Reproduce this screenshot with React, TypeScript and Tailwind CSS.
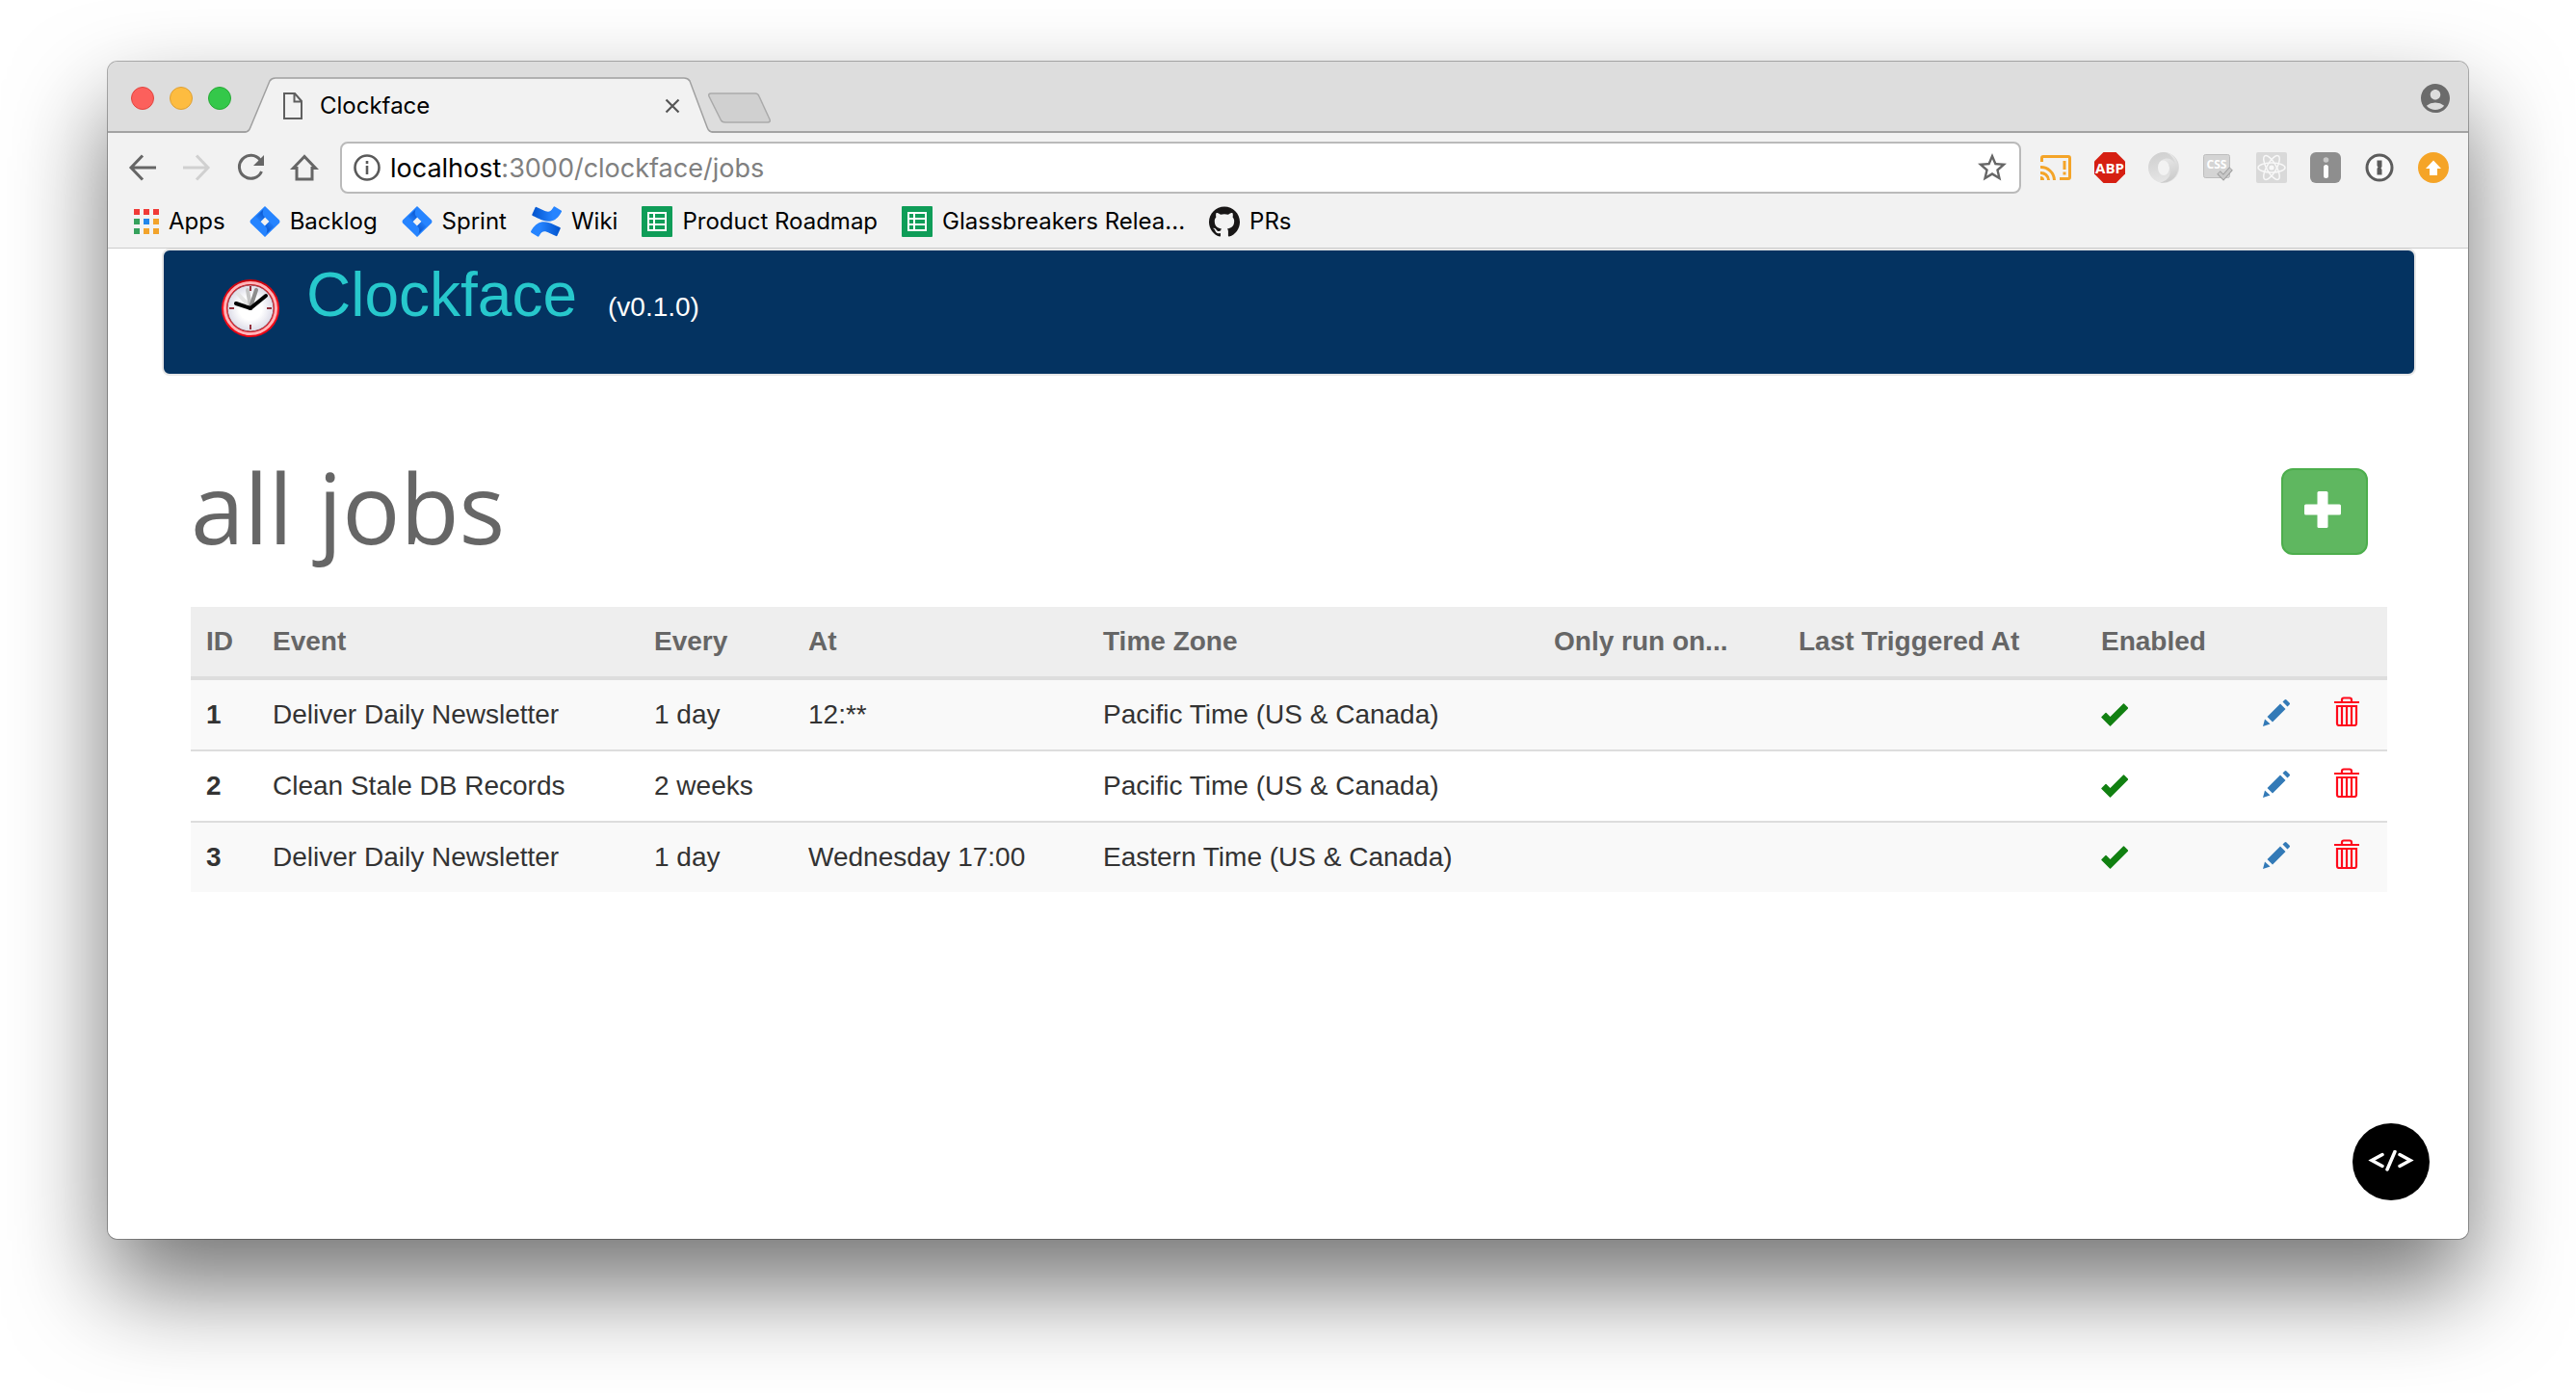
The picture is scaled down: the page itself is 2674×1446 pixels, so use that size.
import React, { useState } from "react";
import { SiGithub } from "react-icons/si";
import { MdAccountCircle, MdStarBorder } from "react-icons/md";

function NavIcon({ label, path, muted = false }: { label: string; path: React.ReactNode; muted?: boolean }) {
  return (
    <button type="button" aria-label={label} className={muted ? "text-[#d0d0d0]" : "text-[#666666]"}>
      <svg className="size-8" viewBox="0 0 32 32" fill="none" stroke="currentColor" strokeWidth="3">
        {path}
      </svg>
    </button>
  );
}

function TabStrip() {
  return (
    <div className="flex h-[74px] items-stretch border-b-2 border-[#a3a3a3] bg-[#dddddd] pr-4 pl-6">
      <div className="flex shrink-0 items-center gap-4 pt-1">
        <button type="button" aria-label="Close window" className="size-6 rounded-full border border-[#e2443f] bg-[#fc605c]" />
        <button type="button" aria-label="Minimize window" className="size-6 rounded-full border border-[#dea034] bg-[#fdbc40]" />
        <button type="button" aria-label="Zoom window" className="size-6 rounded-full border border-[#27a935] bg-[#34c84a]" />
      </div>
      <div className="relative ml-3 flex h-[74px] w-[490px] items-center pt-[18px] pr-9 pl-10">
        <svg className="absolute inset-0 size-full" viewBox="0 0 490 74" preserveAspectRatio="none" fill="none">
          <path d="M2 74 C6 73 7 71 8 68 L28 20 Q30 17 34 17 H458 Q462 17 464 20 L482 68 C483 71 484 73 488 74 Z" fill="#f2f2f2" />
          <path d="M2 73 C6 73 7 71 8 68 L28 20 Q30 17 34 17 H458 Q462 17 464 20 L482 68 C483 71 484 73 488 73" stroke="#a0a0a0" strokeWidth="1.5" />
        </svg>
        <svg className="relative h-7 w-6" viewBox="0 0 24 28" fill="none" stroke="#5f5f5f" strokeWidth="2">
          <path d="M3 1 H14 L21 9 V27 H3 Z M13.500 1 V9.500 H21" />
        </svg>
        <span className="relative ml-4 flex-1 text-2xl text-black">Clockface</span>
        <button type="button" aria-label="Close tab" className="relative">
          <svg className="size-4" viewBox="0 0 16 16" stroke="#555555" strokeWidth="2.200">
            <path d="M1.500 1.500 L14.500 14.500 M14.500 1.500 L1.500 14.500" />
          </svg>
        </button>
      </div>
      <button type="button" aria-label="New tab" className="mt-8 -ml-2 h-8 w-[68px]">
        <svg className="size-full" viewBox="0 0 68 32" fill="#d0d0d0" stroke="#aaaaaa" strokeWidth="1.500">
          <path d="M4 1 H50 Q53 1 54 4 L65 28 Q66 31 63 31 H19 Q15 31 14 28 L2 4 Q1 1 4 1 Z" />
        </svg>
      </button>
      <button type="button" aria-label="Profile" className="ml-auto self-center pt-1 text-[#6b6b6b]">
        <MdAccountCircle className="size-9" />
      </button>
    </div>
  );
}

const extensions: { name: string; art: React.ReactNode }[] = [
  {
    name: "Cast",
    art: (
      <g fill="none" stroke="#f4a428" strokeWidth="3">
        <path d="M1.500 10 V6 Q1.500 4.500 3 4.500 H29 Q30.500 4.500 30.500 6 V26 Q30.500 27.500 29 27.500 H20" />
        <path d="M0 15.500 A14 14 0 0 1 14.500 29 M0 21.500 A8 8 0 0 1 8.500 29" />
        <path d="M0 29 V25 A4 4 0 0 1 4 29 Z" fill="#f4a428" stroke="none" />
        <path d="M25 9 V18 M25 20.500 V23.500" />
      </g>
    ),
  },
  {
    name: "Adblock Plus",
    art: (
      <g>
        <path d="M9.500 0 H22.500 L32 9.500 V22.500 L22.500 32 H9.500 L0 22.500 V9.500 Z" fill="#d61f12" />
        <text x="16" y="21.500" textAnchor="middle" fontFamily="Open Sans" fontWeight="700" fontSize="15" fill="#ffffff">
          ABP
        </text>
      </g>
    ),
  },
  {
    name: "JSON viewer",
    art: (
      <g>
        <defs>
          <linearGradient id="ringA" x1="0.300" y1="0" x2="0.500" y2="1">
            <stop offset="0" stopColor="#d0d0d0" />
            <stop offset="0.500" stopColor="#dadada" />
            <stop offset="1" stopColor="#e6e6e6" />
          </linearGradient>
          <linearGradient id="ringB" x1="0.500" y1="0" x2="0.700" y2="1">
            <stop offset="0" stopColor="#ececec" />
            <stop offset="1" stopColor="#c8c8c8" />
          </linearGradient>
        </defs>
        <path d="M16 0 A16 16 0 1 0 16 32 A16 16 0 1 0 16 0 Z M16 8 A6 8 0 1 1 16 24 A6 8 0 1 1 16 8 Z" fill="url(#ringA)" fillRule="evenodd" />
        <path d="M18 0 A16 16 0 0 1 12 31.500 C20 30 25 23 22 16 C21 10 18 8 14 8.500 C20 4 27 8 28 14 C28 8 25 3 18 0 Z" fill="url(#ringB)" />
      </g>
    ),
  },
  {
    name: "CSS checker",
    art: (
      <g>
        <rect x="1.500" y="2.500" width="27" height="24" rx="2" fill="#d4d4d4" stroke="#bdbdbd" />
        <text x="15" y="17" textAnchor="middle" fontFamily="Open Sans" fontWeight="700" fontSize="12" fill="#ffffff">
          CSS
        </text>
        <path d="M17 21 L22 26 L30 17" fill="none" stroke="#a0a0a0" strokeWidth="5" />
        <path d="M17.500 21.500 L22 26 L29.500 17.500" fill="none" stroke="#c8c8c8" strokeWidth="3" />
      </g>
    ),
  },
  {
    name: "React developer tools",
    art: (
      <g>
        <rect width="32" height="32" rx="2" fill="#d9d9d9" />
        <g fill="none" stroke="#f8f8f8" strokeWidth="1.500">
          <ellipse cx="16" cy="16" rx="14" ry="5" />
          <ellipse cx="16" cy="16" rx="14" ry="5" transform="rotate(60 16 16)" />
          <ellipse cx="16" cy="16" rx="14" ry="5" transform="rotate(120 16 16)" />
        </g>
        <circle cx="16" cy="16" r="2.600" fill="#f8f8f8" />
      </g>
    ),
  },
  {
    name: "Page information",
    art: (
      <g>
        <rect width="32" height="32" rx="6" fill="#8e8e8e" />
        <circle cx="16.500" cy="8" r="2.800" fill="#c8c8c8" />
        <rect x="14" y="13" width="5" height="14" rx="2.500" fill="#ffffff" />
      </g>
    ),
  },
  {
    name: "Password manager",
    art: (
      <g>
        <circle cx="16" cy="16" r="13" fill="#fafafa" stroke="#5c5c5c" strokeWidth="3" />
        <path d="M13.500 8.500 H18.500 V15 L17.500 16.500 L18.500 18 V23.500 H13.500 V17 L14.500 15.500 L13.500 14 Z" fill="#5c5c5c" />
      </g>
    ),
  },
  {
    name: "Update available",
    art: (
      <g>
        <circle cx="16" cy="16" r="16" fill="#f5a427" />
        <path d="M16 8.500 L24 17 H20 V24 H12 V17 H8 Z" fill="#ffffff" />
      </g>
    ),
  },
];

function Toolbar() {
  const [starred, setStarred] = useState(false);
  return (
    <div className="flex h-[72px] items-center px-5">
      <div className="flex w-[221px] items-center gap-6">
        <NavIcon label="Back" path={<path d="M30 16 H4 M16 3.500 L4 16 L16 28.500" />} />
        <NavIcon label="Forward" muted path={<path d="M2 16 H28 M16 3.500 L28 16 L16 28.500" />} />
        <NavIcon
          label="Reload"
          path={
            <>
              <path d="M27.500 20 A12 12 0 1 1 26 8" />
              <path d="M30 3 V14 H19 Z" fill="currentColor" stroke="none" />
            </>
          }
        />
        <NavIcon label="Home" path={<path d="M16 4.500 L4.500 16.500 H8 V28 H24 V16.500 H27.500 Z" />} />
      </div>
      <div className="flex h-[54px] flex-1 items-center rounded-lg border-2 border-[#bababa] bg-white pr-2.5 pl-3">
        <svg className="size-7" viewBox="0 0 28 28" fill="none" stroke="#5a5a5a" strokeWidth="2.600">
          <circle cx="14" cy="14" r="12.500" />
          <path d="M14 12 V21 M14 7 V10" />
        </svg>
        <div className="ml-2.5 flex-1 pt-0.5 text-[27px] leading-8 text-[#808080]">
          <span className="text-black">localhost</span>:3000/clockface/jobs
        </div>
        <button type="button" aria-label="Bookmark this page" aria-pressed={starred} onClick={() => setStarred(!starred)} className="text-[#666666]">
          <MdStarBorder className="size-9" />
        </button>
      </div>
      <div className="ml-5 flex items-center gap-6">
        {extensions.map((e) => (
          <button key={e.name} type="button" aria-label={e.name}>
            <svg className="size-8" viewBox="0 0 32 32">
              {e.art}
            </svg>
          </button>
        ))}
      </div>
    </div>
  );
}

const appsColors = ["#f03a37", "#f03a37", "#f03a37", "#35a15c", "#2186eb", "#f2a32b", "#35a15c", "#f2a32b", "#f2a32b"];

function AppsIcon() {
  return (
    <span className="grid grid-cols-3 gap-1">
      {appsColors.map((c, i) => (
        <span key={i} className="size-1.5" style={{ backgroundColor: c }} />
      ))}
    </span>
  );
}

function JiraIcon() {
  return (
    <svg className="size-8" viewBox="0 0 32 32">
      <defs>
        <linearGradient id="jTop" x1="0.800" y1="0" x2="0.200" y2="1">
          <stop offset="0.200" stopColor="#0a57d0" />
          <stop offset="1" stopColor="#2684ff" />
        </linearGradient>
        <linearGradient id="jBottom" x1="0.200" y1="1" x2="0.800" y2="0">
          <stop offset="0.200" stopColor="#0a57d0" />
          <stop offset="1" stopColor="#2684ff" />
        </linearGradient>
      </defs>
      <path d="M16 0 L31 14.500 Q32 16 31 17.500 L16 32 L1 17.500 Q0 16 1 14.500 Z M16 11.500 L11.500 16 L16 20.500 L20.500 16 Z" fill="#2684ff" fillRule="evenodd" />
      <path d="M15.500 2.500 C13 5 13 9 16 11.500 L11.500 16 L6.500 11 Z" fill="url(#jTop)" />
      <path d="M16.500 29.500 C19 27 19 23 16 20.500 L20.500 16 L25.500 21 Z" fill="url(#jBottom)" />
    </svg>
  );
}

function ConfluenceIcon() {
  return (
    <svg className="size-8" viewBox="0 0 24 24">
      <defs>
        <linearGradient id="cTop" x1="1" y1="0" x2="0" y2="0">
          <stop offset="0.300" stopColor="#2684ff" />
          <stop offset="1" stopColor="#0052cc" />
        </linearGradient>
        <linearGradient id="cBottom" x1="0" y1="0" x2="1" y2="0">
          <stop offset="0.300" stopColor="#2684ff" />
          <stop offset="1" stopColor="#0052cc" />
        </linearGradient>
      </defs>
      <path
        d="M.87 18.257c-.248.382-.53.875-.763 1.245a.764.764 0 0 0 .255 1.04l4.965 3.054a.764.764 0 0 0 1.058-.26c.199-.332.454-.763.733-1.221 1.967-3.247 3.945-2.853 7.508-1.146l4.957 2.337a.764.764 0 0 0 1.028-.382l2.364-5.346a.764.764 0 0 0-.382-1 599.851 599.851 0 0 1-4.965-2.361C10.911 10.97 5.224 11.185.87 18.257z"
        fill="url(#cBottom)"
      />
      <path
        d="M23.131 5.743c.249-.405.531-.875.764-1.25a.764.764 0 0 0-.256-1.034L18.675.404a.764.764 0 0 0-1.058.26c-.195.335-.451.763-.734 1.225-1.966 3.246-3.945 2.85-7.508 1.146L4.437.694a.764.764 0 0 0-1.027.382L1.046 6.422a.764.764 0 0 0 .382 1c1.039.49 3.105 1.467 4.965 2.361 6.698 3.246 12.392 3.029 16.738-4.04z"
        fill="url(#cTop)"
      />
    </svg>
  );
}

function SheetIcon() {
  return (
    <svg className="size-8" viewBox="0 0 32 32">
      <rect width="32" height="32" rx="1" fill="#0f9d58" />
      <path d="M6 6 H26 V26 H6 Z M8 8 V12 H12 V8 Z M14 8 V12 H24 V8 Z M8 14 V18 H12 V14 Z M14 14 V18 H24 V14 Z M8 20 V24 H12 V20 Z M14 20 V24 H24 V20 Z" fill="#ffffff" fillRule="evenodd" />
    </svg>
  );
}

const bookmarks: { label: string; icon: React.ReactNode }[] = [
  { label: "Apps", icon: <AppsIcon /> },
  { label: "Backlog", icon: <JiraIcon /> },
  { label: "Sprint", icon: <JiraIcon /> },
  { label: "Wiki", icon: <ConfluenceIcon /> },
  { label: "Product Roadmap", icon: <SheetIcon /> },
  { label: "Glassbreakers Relea...", icon: <SheetIcon /> },
  { label: "PRs", icon: <SiGithub className="size-8 text-[#181616]" /> },
];

function BookmarksBar() {
  return (
    <nav aria-label="Bookmarks" className="flex h-12 items-start gap-[25px] border-b border-[#cccccc] pt-1 pl-[27px]">
      {bookmarks.map((b) => (
        <a key={b.label} href="#" className="flex h-8 items-center gap-2.5 text-2xl whitespace-nowrap text-black">
          {b.icon}
          {b.label}
        </a>
      ))}
    </nav>
  );
}

function ClockLogo() {
  return (
    <svg className="size-[60px]" viewBox="0 0 60 60">
      <defs>
        <linearGradient id="rim" x1="0" y1="0" x2="0" y2="1">
          <stop offset="0" stopColor="#c8000c" />
          <stop offset="0.500" stopColor="#ff1420" />
          <stop offset="1" stopColor="#e80010" />
        </linearGradient>
        <radialGradient id="face">
          <stop offset="0.500" stopColor="#ffffff" />
          <stop offset="1" stopColor="#dcdce8" />
        </radialGradient>
      </defs>
      <circle cx="30" cy="30" r="30" fill="url(#rim)" />
      <circle cx="30" cy="30" r="26.500" fill="none" stroke="#ffb4b8" strokeWidth="3" />
      <circle cx="30" cy="30" r="24" fill="url(#face)" stroke="#9c4048" strokeWidth="1" />
      <path d="M30 7 V12 M30 47 V52 M8 30 H13 M47 30 H52" stroke="#94303c" strokeWidth="2" />
      <g strokeLinecap="round" strokeWidth="4">
        <path d="M30 29 L17 15" stroke="#e4e4e4" />
        <path d="M30 29 L27 11" stroke="#c4c4c4" />
        <path d="M30 29 L36 11" stroke="#8c8c8c" />
        <path d="M30 30 L46 17" stroke="#000000" />
        <path d="M30 30 L15 25" stroke="#000000" />
      </g>
    </svg>
  );
}

const columns: { title: string; width: string }[] = [
  { title: "ID", width: "w-[69px]" },
  { title: "Event", width: "w-[396px]" },
  { title: "Every", width: "w-[160px]" },
  { title: "At", width: "w-[306px]" },
  { title: "Time Zone", width: "w-[468px]" },
  { title: "Only run on...", width: "w-[254px]" },
  { title: "Last Triggered At", width: "w-[314px]" },
  { title: "Enabled", width: "w-[168px]" },
  { title: "", width: "w-[74px]" },
  { title: "", width: "w-[71px]" },
];

const jobs = [
  { id: 1, event: "Deliver Daily Newsletter", every: "1 day", at: "12:**", zone: "Pacific Time (US & Canada)" },
  { id: 2, event: "Clean Stale DB Records", every: "2 weeks", at: "", zone: "Pacific Time (US & Canada)" },
  { id: 3, event: "Deliver Daily Newsletter", every: "1 day", at: "Wednesday 17:00", zone: "Eastern Time (US & Canada)" },
];

function JobsTable() {
  return (
    <table className="mt-[54px] w-full table-fixed border-collapse text-left text-[28px] leading-10 text-[#333333]">
      <thead>
        <tr className="border-b-4 border-[#dddddd] bg-[#eeeeee] text-[#666666]">
          {columns.map((c, i) => (
            <th key={i} scope="col" className={`${c.width} p-4 font-bold whitespace-nowrap`}>
              {c.title}
            </th>
          ))}
        </tr>
      </thead>
      <tbody>
        {jobs.map((j) => (
          <tr key={j.id} className="border-b-2 border-[#dddddd] last:border-b-0 odd:bg-[#f9f9f9]">
            <th scope="row" className="p-4 font-bold">{j.id}</th>
            <td className="p-4">{j.event}</td>
            <td className="p-4">{j.every}</td>
            <td className="p-4 whitespace-nowrap">{j.at}</td>
            <td className="p-4">{j.zone}</td>
            <td />
            <td />
            <td className="p-4">
              <svg role="img" aria-label="Enabled" className="h-6 w-7" viewBox="0 0 28 24" fill="#118011">
                <path d="M24 0.500 L28 4.500 Q28.500 5 28 5.500 L10 23.500 Q9.500 24 9 23.500 L0.500 15 Q0 14.500 0.500 14 L4.500 10 Q5 9.500 5.500 10 L9.500 14 L23 0.500 Q23.500 0 24 0.500 Z" />
              </svg>
            </td>
            <td className="p-4">
              <a href="#" aria-label={`Edit job ${j.id}`} className="flex h-10 items-start pt-1">
                <svg className="size-7" viewBox="0 0 28 28" fill="#337ab7">
                  <path d="M0 28 L2 20.500 L7.500 25.500 Z M4.500 18 L18 4.500 L23.500 10 L10 23.500 Z M20.500 2.500 L22.500 0.500 Q23.500 -0.500 24.500 0.500 L27.500 3.500 Q28.500 4.500 27.500 5.500 L25.500 7.500 Z" />
                </svg>
              </a>
            </td>
            <td className="p-4">
              <a href="#" aria-label={`Delete job ${j.id}`} className="flex h-10 items-start">
                <svg className="h-8 w-[26px]" viewBox="0 0 26 32" fill="none" stroke="#ff0a1c" strokeWidth="2.200">
                  <path d="M0 7 H26 M8 7 V4.500 Q8 2.500 10 2.500 H16 Q18 2.500 18 4.500 V7 M3 11 H23 V29 Q23 31 21 31 H5 Q3 31 3 29 Z M8 11 V31 M13 11 V31 M18 11 V31" />
                </svg>
              </a>
            </td>
          </tr>
        ))}
      </tbody>
    </table>
  );
}

export default function App() {
  return (
    <div className="flex min-h-screen flex-col bg-white px-28 pt-16 pb-40">
      <div className="flex flex-1 flex-col overflow-hidden rounded-[10px] bg-[#f2f2f2] font-[Inter,sans-serif] shadow-[0_0_0_1px_rgba(0,0,0,0.3),0_50px_100px_rgba(0,0,0,0.55)]">
        <TabStrip />
        <Toolbar />
        <BookmarksBar />
        <main className="relative flex-1 bg-white pr-[54px] pl-14 font-['Liberation_Sans',sans-serif]">
          <header className="flex h-[132px] rounded-lg border-2 border-[#e7e7e7] bg-[#043361] px-[60px]">
            <div className="mt-[30px]">
              <ClockLogo />
            </div>
            <div className="ml-7 flex items-baseline">
              <a href="#" className="text-[64px] leading-[92px] text-[#27c8cc]">Clockface</a>
              <span className="ml-8 text-[28px] text-white">(v0.1.0)</span>
            </div>
          </header>
          <section className="mx-[30px] mt-24">
            <div className="flex h-[90px] items-start justify-between pr-5">
              <h1 className="font-['Open_Sans',sans-serif] text-[100px] leading-[80px] text-[#666666]">all jobs</h1>
              <button type="button" aria-label="New job" className="flex size-[90px] items-center justify-center rounded-xl border-2 border-[#4cae4c] bg-[#5fb760] pr-1 pb-1">
                <svg className="size-[38px]" viewBox="0 0 38 38" fill="#ffffff">
                  <rect x="13.500" width="11" height="38" rx="1.500" />
                  <rect y="13.500" width="38" height="11" rx="1.500" />
                </svg>
              </button>
            </div>
            <JobsTable />
          </section>
          <button type="button" aria-label="View source" className="absolute right-10 bottom-10 flex size-20 items-center justify-center rounded-full bg-black">
            <svg className="h-6 w-12" viewBox="0 0 48 24" fill="none" stroke="#ffffff" strokeWidth="3.500" strokeLinecap="round">
              <path d="M15 4.500 L4 10.500 L15 16.500 M33 4.500 L44 10.500 L33 16.500 M28 1.500 L20 20" />
            </svg>
          </button>
        </main>
      </div>
    </div>
  );
}
